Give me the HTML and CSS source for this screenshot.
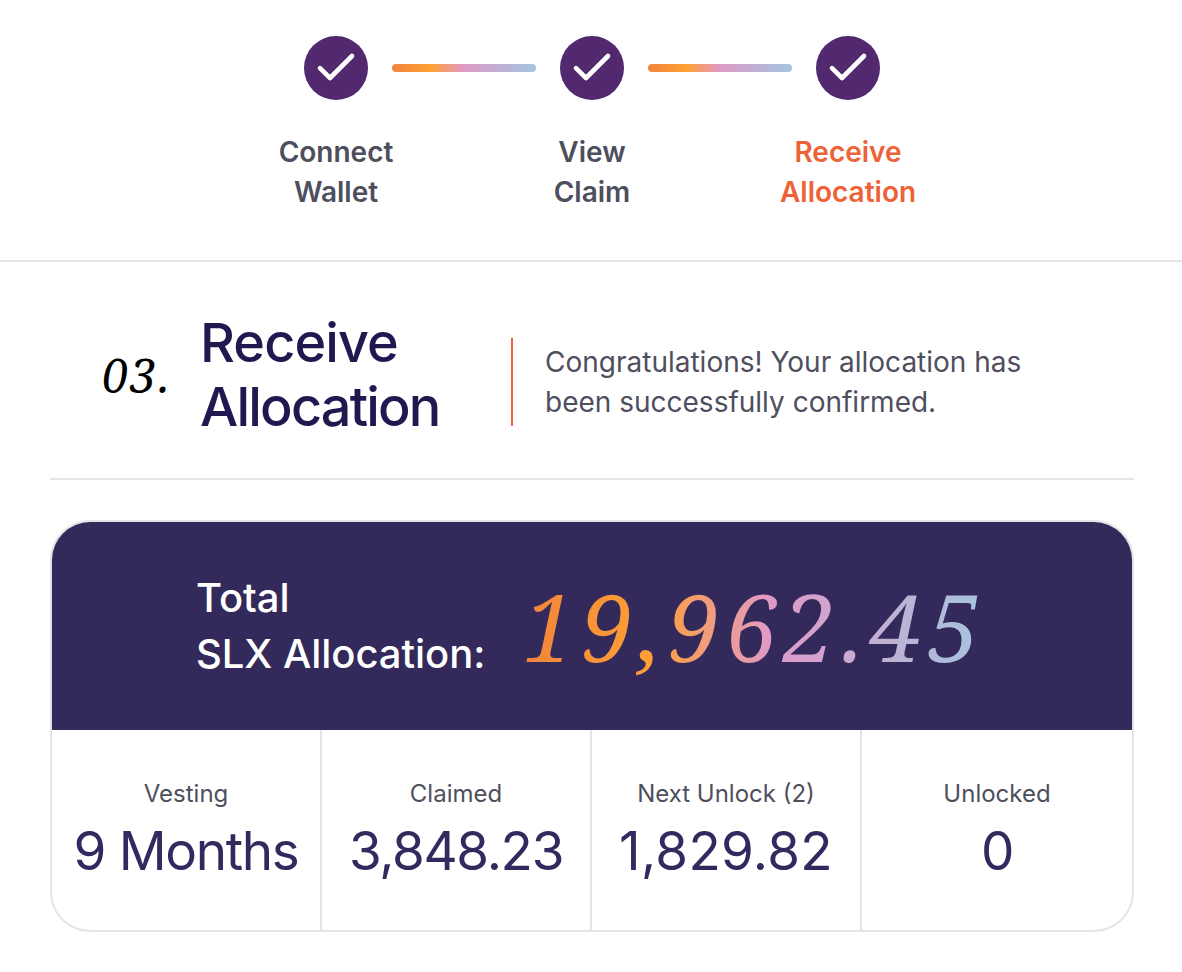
FILE: index.html
```html
<!DOCTYPE html>
<html lang="en">
<head>
<meta charset="UTF-8">
<meta name="viewport" content="width=device-width, initial-scale=1.0">
<title>Receive Allocation</title>
<link rel="stylesheet" href="styles.css">
</head>
<body>

<!-- Steps -->
<div class="steps">
    <div class="step">
        <svg class="check" viewBox="0 0 64 64"><circle cx="32" cy="32" r="32"/><path d="M16 32.200L26 42L48 20"/></svg>
        <div class="step-label">Connect<br>Wallet</div>
    </div>
    <div class="step-line"></div>
    <div class="step">
        <svg class="check" viewBox="0 0 64 64"><circle cx="32" cy="32" r="32"/><path d="M16 32.200L26 42L48 20"/></svg>
        <div class="step-label">View<br>Claim</div>
    </div>
    <div class="step-line"></div>
    <div class="step active">
        <svg class="check" viewBox="0 0 64 64"><circle cx="32" cy="32" r="32"/><path d="M16 32.200L26 42L48 20"/></svg>
        <div class="step-label">Receive<br>Allocation</div>
    </div>
</div>

<div class="content">
    <!-- Heading -->
    <div class="heading">
        <span class="number">03.</span>
        <h1>Receive<br><span class="tight">Allocation</span></h1>
        <p>Congratulations! Your allocation has<br>been successfully confirmed.</p>
    </div>

    <!-- Allocation card -->
    <div class="card">
        <div class="total">
            <div class="total-label">Total<br>SLX Allocation:</div>
            <div class="total-value">19,962.45</div>
        </div>
        <div class="stats">
            <div class="stat">
                <div class="stat-label">Vesting</div>
                <div class="stat-value">9 Months</div>
            </div>
            <div class="stat">
                <div class="stat-label">Claimed</div>
                <div class="stat-value">3,848.23</div>
            </div>
            <div class="stat">
                <div class="stat-label">Next Unlock (2)</div>
                <div class="stat-value wide">1,829.82</div>
            </div>
            <div class="stat">
                <div class="stat-label">Unlocked</div>
                <div class="stat-value">0</div>
            </div>
        </div>
    </div>
</div>

</body>
</html>
```
FILE: styles.css
```css
* {
    box-sizing: border-box;
}
body {
    margin: 0;
    font-family: Inter, sans-serif;
    background: #fff;
    color: #4e4f5d;
}

/* Steps */
.steps {
    display: flex;
    justify-content: center;
    height: 262px;
    padding: 36px 0 0 2px;
    border-bottom: 2px solid #e4e4e5;
}
.step {
    width: 64px;
    display: flex;
    flex-direction: column;
    align-items: center;
}
.check {
    width: 64px;
    height: 64px;
}
.check circle {
    fill: #52296f;
}
.check path {
    fill: none;
    stroke: #fff;
    stroke-width: 4.6;
    stroke-linecap: round;
    stroke-linejoin: round;
}
.step-line {
    width: 144px;
    height: 8px;
    margin: 28px 24px 0;
    border-radius: 4px;
    background: linear-gradient(90deg, #f0853b 0%, #ff9f35 27%, #e09ac8 50%, #a2c5de 100%);
}
.step-label {
    margin-top: 32px;
    font-size: 28px;
    font-weight: 600;
    line-height: 40px;
    text-align: center;
    white-space: nowrap;
}
.active .step-label {
    color: #ed6237;
}

/* Heading */
.content {
    margin: 0 48px 0 50px;
}
.heading {
    display: flex;
    height: 218px;
    border-bottom: 2px solid #e4e4e5;
}
.number {
    width: 150px;
    padding: 81px 0 0 52px;
    font-family: "Noto Serif", "DejaVu Serif", serif;
    font-size: 47px;
    font-style: italic;
    line-height: 64px;
    letter-spacing: 1.8px;
    color: #000;
}
h1 {
    width: 311px;
    margin: 0;
    padding-top: 49px;
    font-size: 54px;
    font-weight: 500;
    line-height: 64px;
    letter-spacing: -0.9px;
    color: #231750;
}
h1 .tight {
    letter-spacing: -1.8px;
}
.heading p {
    height: 88px;
    margin: 76px 0 0;
    padding: 4px 0 0 32px;
    border-left: 2px solid #ed6237;
    font-size: 28px;
    line-height: 40px;
    white-space: nowrap;
}

/* Allocation card */
.card {
    height: 412px;
    margin-top: 40px;
    border: 2px solid #e4e4e5;
    border-radius: 40px;
    overflow: hidden;
}
.total {
    display: flex;
    height: 208px;
    padding-left: 144px;
    background: #33295a;
}
.total-label {
    width: 327px;
    padding-top: 48px;
    font-size: 40px;
    font-weight: 500;
    line-height: 56px;
    letter-spacing: -0.05px;
    color: #fff;
    white-space: nowrap;
}
.total-value {
    height: 180px;
    padding: 24px 6px 0 0;
    font-family: "Noto Serif", "DejaVu Serif", serif;
    font-size: 93px;
    font-style: italic;
    line-height: 160px;
    letter-spacing: 5.8px;
    background: linear-gradient(90deg, #f0853b 0%, #ff9f35 27%, #e09ac8 53%, #a2c5de 100%);
    -webkit-background-clip: text;
    background-clip: text;
    color: transparent;
}
.stats {
    display: grid;
    grid-template-columns: 270px 270px 270px 1fr;
    height: 200px;
}
.stat {
    padding-top: 48px;
    border-right: 2px solid #e4e4e5;
    text-align: center;
    white-space: nowrap;
}
.stat:last-child {
    border-right: 0;
}
.stat-label {
    font-size: 24px;
    line-height: 32px;
}
.stat-value {
    font-size: 53px;
    line-height: 82px;
    letter-spacing: -1.3px;
    color: #33295f;
}
.stat-value.wide {
    letter-spacing: 0.3px;
}
```
